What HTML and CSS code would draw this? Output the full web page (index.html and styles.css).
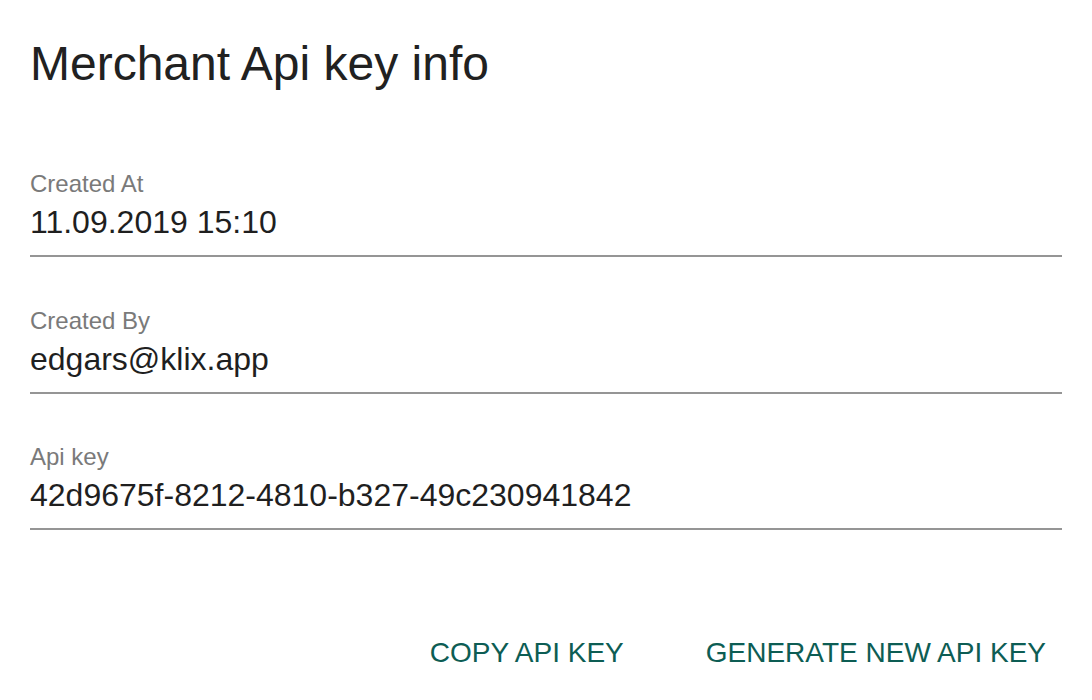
FILE: index.html
```html
<!DOCTYPE html>
<html>
<head>
<meta charset="utf-8">
<link rel="stylesheet" href="styles.css">
</head>
<body>
<div class="dialog">
  <h1 class="title">Merchant Api key info</h1>
  <div class="fields">
    <div class="field">
      <div class="label">Created At</div>
      <div class="value">11.09.2019 15:10</div>
    </div>
    <div class="field">
      <div class="label">Created By</div>
      <div class="value">edgars@klix.app</div>
    </div>
    <div class="field">
      <div class="label">Api key</div>
      <div class="value">42d9675f-8212-4810-b327-49c230941842</div>
    </div>
  </div>
  <div class="actions">
    <button class="btn">COPY API KEY</button>
    <button class="btn">GENERATE NEW API KEY</button>
  </div>
</div>
</body>
</html>
```
FILE: styles.css
```css
html, body {
  margin: 0;
  padding: 0;
  background: #fff;
}
body {
  font-family: "Liberation Sans", Arial, sans-serif;
  color: #212121;
}
.dialog {
  width: 1092px;
  height: 700px;
  box-sizing: border-box;
  padding: 36px 30px 0 30px;
  display: flex;
  flex-direction: column;
}
.title {
  margin: 0;
  font-size: 48px;
  line-height: 56px;
  font-weight: 400;
  color: #212121;
}
.fields {
  margin-top: 78px;
  display: flex;
  flex-direction: column;
  gap: 49.5px;
}
.field {
  border-bottom: 2px solid #959595;
  padding-bottom: 15px;
}
.label {
  font-size: 24px;
  line-height: 28px;
  color: #7a7a7a;
}
.value {
  margin-top: 6px;
  font-size: 32px;
  line-height: 36px;
  color: #1f1f1f;
}
.actions {
  margin-top: 99px;
  display: flex;
  justify-content: flex-end;
  gap: 58px;
  padding-right: 4px;
}
.btn {
  background: none;
  border: 0;
  padding: 6px 12px;
  font-family: "Liberation Sans", Arial, sans-serif;
  font-size: 28px;
  line-height: 36px;
  color: #0d5d54;
  cursor: pointer;
}
```
